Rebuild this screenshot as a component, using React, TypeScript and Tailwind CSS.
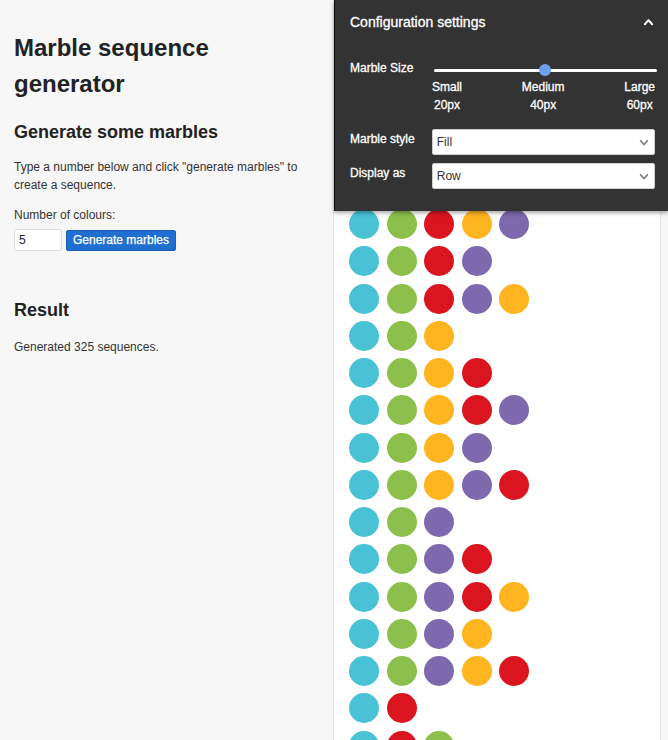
import React from 'react'

const COLOURS = ['#48c2d4', '#8cbf4c', '#da1520', '#feb520', '#7e68ae']

// every ordered sequence of distinct colours, depth first
function buildSequences(n: number) {
    const out: number[][] = []
    const walk = (seq: number[]) => {
        for (let i = 0; i < n; i++) {
            if (seq.includes(i)) continue
            const next = [...seq, i]
            out.push(next)
            walk(next)
        }
    }
    walk([])
    return out
}

function Chevron({ up, className }: { up?: boolean, className?: string }) {
    return (
        <svg viewBox="0 0 12 8" className={className} fill="none" stroke="currentColor" strokeWidth={2.2} strokeLinecap="round" strokeLinejoin="round">
            {up ? <polyline points="2,6.5 6,2 10,6.5" /> : <polyline points="2,2 6,6.5 10,2" />}
        </svg>
    )
}

function Select({ value }: { value: string }) {
    return (
        <div className="relative w-[224px] [-webkit-text-stroke:0px]">
            <select
                defaultValue={value}
                className="appearance-none w-full h-[26px] bg-white border border-[#cfcfcf] rounded-[2px] pl-[4px] text-[12px] text-[#333] outline-none"
            >
                <option>{value}</option>
            </select>
            <Chevron className="absolute right-[6px] top-[10px] w-[10px] h-[7px] text-[#8a8a8a] pointer-events-none" />
        </div>
    )
}

function ConfigPanel() {
    return (
        <div className="absolute top-0 right-0 w-[334px] h-[211px] bg-[#333333] border-l border-[#111] shadow-[0_2px_4px_rgba(0,0,0,0.35)] pl-[15px] pr-[13px] text-white">
            <div className="h-[44px] flex items-center justify-between [-webkit-text-stroke:0.3px_white]">
                <span className="text-[14px] leading-[20px]">Configuration settings</span>
                <Chevron up className="w-[11px] h-[8px] mr-[1px] text-white" />
            </div>

            <div className="flex mt-[16px] [-webkit-text-stroke:0.3px_white]">
                <span className="w-[82px] text-[12px] leading-[16px]">Marble Size</span>
                <div className="flex-1 flex flex-col">
                    <div className="relative h-[16px] mt-[2px] ml-[2px] -mr-[2px] flex items-center">
                        <div className="w-full h-[3px] rounded-full bg-white" />
                        <div className="absolute left-[105px] top-[2px] w-[12px] h-[12px] rounded-full bg-[#6aa1ea]" />
                    </div>
                    <div className="flex justify-between mt-[2px] text-[12px] leading-[14px]">
                        <div className="flex flex-col items-center gap-[4px]">
                            <span>Small</span>
                            <span>20px</span>
                        </div>
                        <div className="flex flex-col items-center gap-[4px]">
                            <span>Medium</span>
                            <span>40px</span>
                        </div>
                        <div className="flex flex-col items-center gap-[4px]">
                            <span>Large</span>
                            <span>60px</span>
                        </div>
                    </div>
                </div>
            </div>

            <div className="flex mt-[17px]">
                <span className="w-[82px] pt-[2px] text-[12px] leading-[16px] [-webkit-text-stroke:0.3px_white]">Marble style</span>
                <Select value="Fill" />
            </div>
            <div className="flex mt-[8px]">
                <span className="w-[82px] pt-[2px] text-[12px] leading-[16px] [-webkit-text-stroke:0.3px_white]">Display as</span>
                <Select value="Row" />
            </div>
        </div>
    )
}

export default function App() {
    const sequences = buildSequences(5)

    return (
        <div className="relative flex h-[740px] overflow-hidden bg-[#f7f7f7] text-[#222] font-['Liberation_Sans',Arial,sans-serif]">
            <div className="w-[334px] shrink-0 border-r border-[#e4e4e4] px-[14px] pt-[30px]">
                <h1 className="text-[24px] leading-[36px] font-bold">Marble sequence<br />generator</h1>
                <h2 className="mt-[18px] text-[18px] leading-[24px] font-bold">Generate some marbles</h2>
                <p className="mt-[14px] text-[12px] leading-[18px] text-[#333]">
                    Type a number below and click "generate marbles" to create a sequence.
                </p>
                <p className="mt-[12px] text-[12px] leading-[18px] text-[#333]">Number of colours:</p>
                <div className="mt-[5px] flex items-center gap-[4px]">
                    <input
                        defaultValue="5"
                        className="w-[48px] h-[22px] bg-white border border-[#dcdcdc] rounded-[2px] px-[4px] text-[12px] text-[#222] outline-none"
                    />
                    <button className="h-[21px] px-[6px] bg-[#1f6fd0] border border-[#1a5fb4] rounded-[2px] text-white text-[12px] leading-[18px] [-webkit-text-stroke:0.25px_white]">
                        Generate marbles
                    </button>
                </div>
                <h2 className="mt-[47px] text-[18px] leading-[24px] font-bold">Result</h2>
                <p className="mt-[16px] text-[12px] leading-[18px] text-[#333]">Generated 325 sequences.</p>
            </div>

            <div className="w-[327px] shrink-0 bg-white border-r border-[#e8e8e8] overflow-hidden px-[15px] pt-[60px]">
                <div className="flex flex-col gap-[7.25px]">
                    {sequences.map((seq, i) => (
                        <div key={i} className="flex gap-[7.5px]">
                            {seq.map((c, j) => (
                                <div
                                    key={j}
                                    className="w-[30px] h-[30px] rounded-full shrink-0"
                                    style={{ backgroundColor: COLOURS[c] }}
                                />
                            ))}
                        </div>
                    ))}
                </div>
            </div>

            <ConfigPanel />
        </div>
    )
}
